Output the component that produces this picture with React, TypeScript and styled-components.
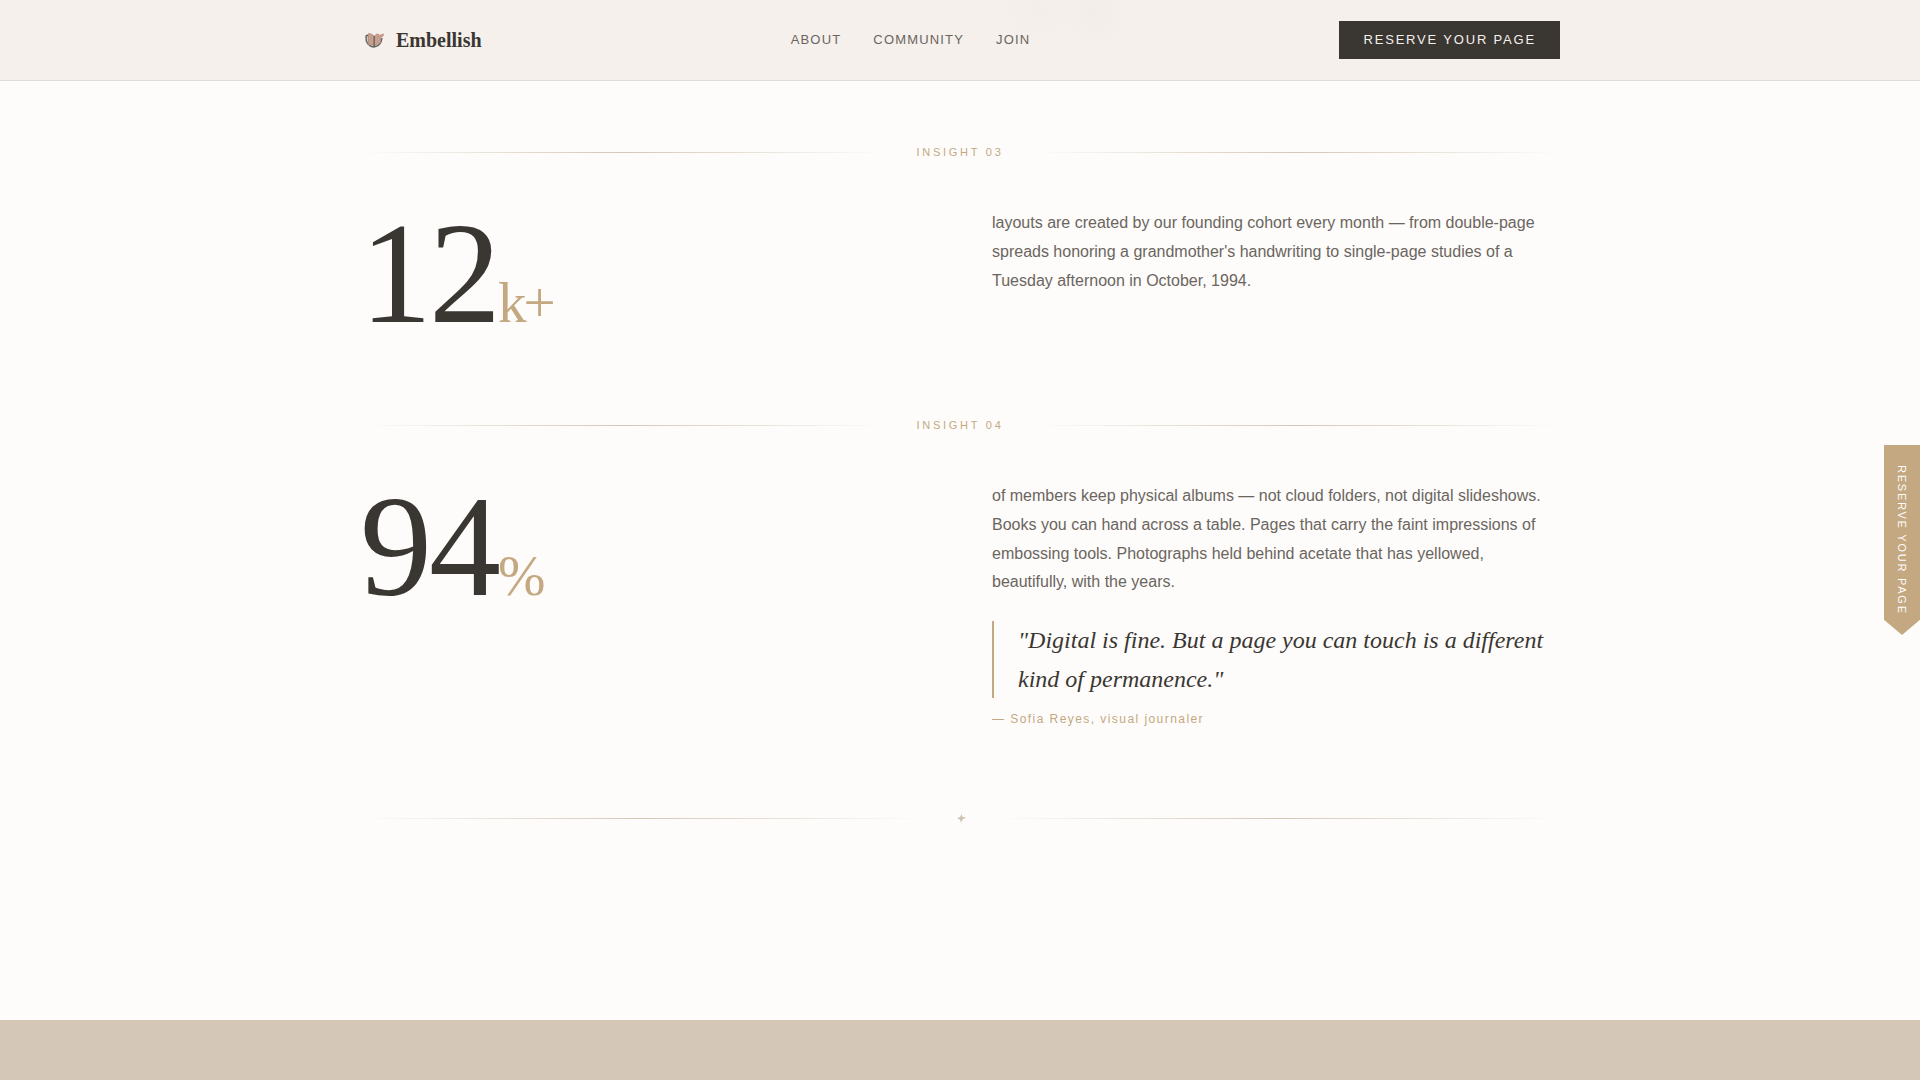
import React from "react";
import styled, { createGlobalStyle } from "styled-components";

const sans = `"Liberation Sans", Arial, sans-serif`;
const serif = `"Liberation Serif", "Times New Roman", serif`;
const ink = "#3a3632";
const gold = "#c4a882";
const muted = "#6b6560";
const sand = "#d4c7b8";

const GlobalStyle = createGlobalStyle`
  *, *::before, *::after { box-sizing: border-box; }
  body {
    margin: 0;
    background: #fdfcfa;
    color: ${ink};
    font-family: ${sans};
    font-size: 16px;
    overflow: hidden;
  }
`;

const Page = styled.div`
  display: flex;
  flex-direction: column;
  height: 100vh;
`;

const Header = styled.header`
  flex: none;
  padding: 21px 32px;
  background:
    radial-gradient(36px 36px at 54% 10px, #f3eee9, transparent),
    radial-gradient(36px 40px at 57% 10px, #f2ede8, transparent),
    #f5f0eb;
  border-bottom: 1px solid #dedbd8;
`;

const HeaderInner = styled.div`
  display: flex;
  align-items: center;
  justify-content: space-between;
  max-width: 1200px;
  margin: 0 auto;
`;

const Brand = styled.a`
  display: flex;
  align-items: center;
  gap: 8px;
  color: ${ink};
  font: 700 20px/28px ${serif};
  text-decoration: none;
`;

const Nav = styled.nav`
  display: flex;
  gap: 32px;
`;

const NavLink = styled.a`
  color: ${muted};
  font-size: 13px;
  line-height: 20px;
  letter-spacing: 0.09em;
  text-transform: uppercase;
  text-decoration: none;
`;

const ReserveButton = styled.button`
  padding: 9px 24px;
  border: 0;
  background: ${ink};
  color: #f5f0eb;
  font: 400 13px/20px ${sans};
  letter-spacing: 0.14em;
  text-transform: uppercase;
  cursor: pointer;
`;

const Main = styled.main`
  flex: 1;
  width: 100%;
  max-width: 1200px;
  margin: 0 auto;
  padding-top: 62px;
`;

const Insight = styled.section`
  margin-bottom: 77px;
`;

const Divider = styled.div`
  display: flex;
  align-items: center;
  gap: 24px;

  &::before,
  &::after {
    content: "";
    flex: 1;
    height: 1px;
    background: linear-gradient(90deg, transparent, ${sand}, transparent);
  }
`;

const InsightLabel = styled.h2`
  margin: 0;
  padding: 0 8px;
  color: ${gold};
  font: 400 11px/18px ${sans};
  letter-spacing: 0.25em;
  text-transform: uppercase;
`;

const Ornament = styled.span`
  display: flex;
  align-items: center;
  height: 28px;
  padding: 0 8px;
`;

const Columns = styled.div`
  display: grid;
  grid-template-columns: 1fr 1fr;
  gap: 64px;
  margin-top: 48px;
`;

const Stat = styled.p`
  margin: 0;
  font: 400 144px/130px ${serif};
  letter-spacing: -3px;
`;

const Unit = styled.span`
  color: ${gold};
  font-size: 57px;
  line-height: 1;
`;

const Copy = styled.p`
  margin: 0;
  color: ${muted};
  line-height: 1.8;
`;

const Quote = styled.blockquote`
  margin: 24px 0 0;
  padding-left: 24px;
  border-left: 2px solid ${gold};
  font: italic 400 24px/1.6 ${serif};
`;

const Cite = styled.cite`
  display: block;
  margin-top: 12px;
  color: ${gold};
  font-size: 12px;
  font-style: normal;
  line-height: 18px;
  letter-spacing: 0.12em;
`;

const Band = styled.footer`
  flex: none;
  height: 60px;
  background: ${sand};
`;

const Ribbon = styled.button`
  position: fixed;
  right: 0;
  top: 445px;
  padding: 20px 11px;
  height: 190px;
  border: 0;
  background: ${gold};
  color: #fdfcfa;
  clip-path: polygon(0 0, 100% 0, 100% 92%, 50% 100%, 0 92%);
  font: 400 11px/14px ${sans};
  letter-spacing: 0.16em;
  text-align: left;
  text-transform: uppercase;
  white-space: nowrap;
  writing-mode: vertical-rl;
  cursor: pointer;
`;

const BookIcon = () => (
  <svg width="28" height="28" viewBox="0 0 28 28" fill="none" aria-hidden="true">
    <path d="M8 9L6 10c-.4 6 1 10 8 11 6-1 7.500-4 8-9" fill="#cfc4ba" stroke="#66625e" strokeWidth="1.4" />
    <path d="M8.500 7.500c2 0 4.500 1 5.500 2.500v9.500c-2-1.500-4-1.500-5.500-1z" fill="#c79f8f" stroke="#a27f72" strokeWidth=".6" />
    <path d="M14.500 10c1-1.600 2.500-2.200 4-2l.5 1.500 4.500-1.500c.2 2-1 3-3 3.200V17c-2 .5-4 1-6 2.500z" fill="#c79f8f" stroke="#b08072" strokeWidth=".6" />
    <path d="M14.200 10v11" stroke="#66625e" strokeWidth="1.2" />
  </svg>
);

const Sparkle = () => (
  <svg width="12" height="12" viewBox="0 0 12 12" aria-hidden="true">
    <path d="M7.500 1l1 2.700L12 4.800 8.800 6.200 6.800 9.500 6 6.500 3 5.200 6.300 3.700z" fill="#cfc4b2" />
  </svg>
);

type InsightProps = { label: string; value: string; unit: string; children: React.ReactNode };

const InsightBlock = ({ label, value, unit, children }: InsightProps) => (
  <Insight>
    <Divider>
      <InsightLabel>{label}</InsightLabel>
    </Divider>
    <Columns>
      <Stat>
        {value}
        <Unit>{unit}</Unit>
      </Stat>
      <div>{children}</div>
    </Columns>
  </Insight>
);

export default function App() {
  return (
    <Page>
      <GlobalStyle />
      <Header>
        <HeaderInner>
          <Brand href="#">
            <BookIcon />
            Embellish
          </Brand>
          <Nav aria-label="Main">
            <NavLink href="#about">About</NavLink>
            <NavLink href="#community">Community</NavLink>
            <NavLink href="#join">Join</NavLink>
          </Nav>
          <ReserveButton type="button">Reserve Your Page</ReserveButton>
        </HeaderInner>
      </Header>
      <Main>
        <InsightBlock label="Insight 03" value="12" unit="k+">
          <Copy>
            layouts are created by our founding cohort every month — from double-page spreads
            honoring a grandmother's handwriting to single-page studies of a Tuesday afternoon in
            October, 1994.
          </Copy>
        </InsightBlock>
        <InsightBlock label="Insight 04" value="94" unit="%">
          <Copy>
            of members keep physical albums — not cloud folders, not digital slideshows. Books you
            can hand across a table. Pages that carry the faint impressions of embossing tools.
            Photographs held behind acetate that has yellowed, beautifully, with the years.
          </Copy>
          <Quote>"Digital is fine. But a page you can touch is a different kind of permanence."</Quote>
          <Cite>— Sofia Reyes, visual journaler</Cite>
        </InsightBlock>
        <Divider>
          <Ornament>
            <Sparkle />
          </Ornament>
        </Divider>
      </Main>
      <Band />
      <Ribbon type="button">Reserve Your Page</Ribbon>
    </Page>
  );
}
